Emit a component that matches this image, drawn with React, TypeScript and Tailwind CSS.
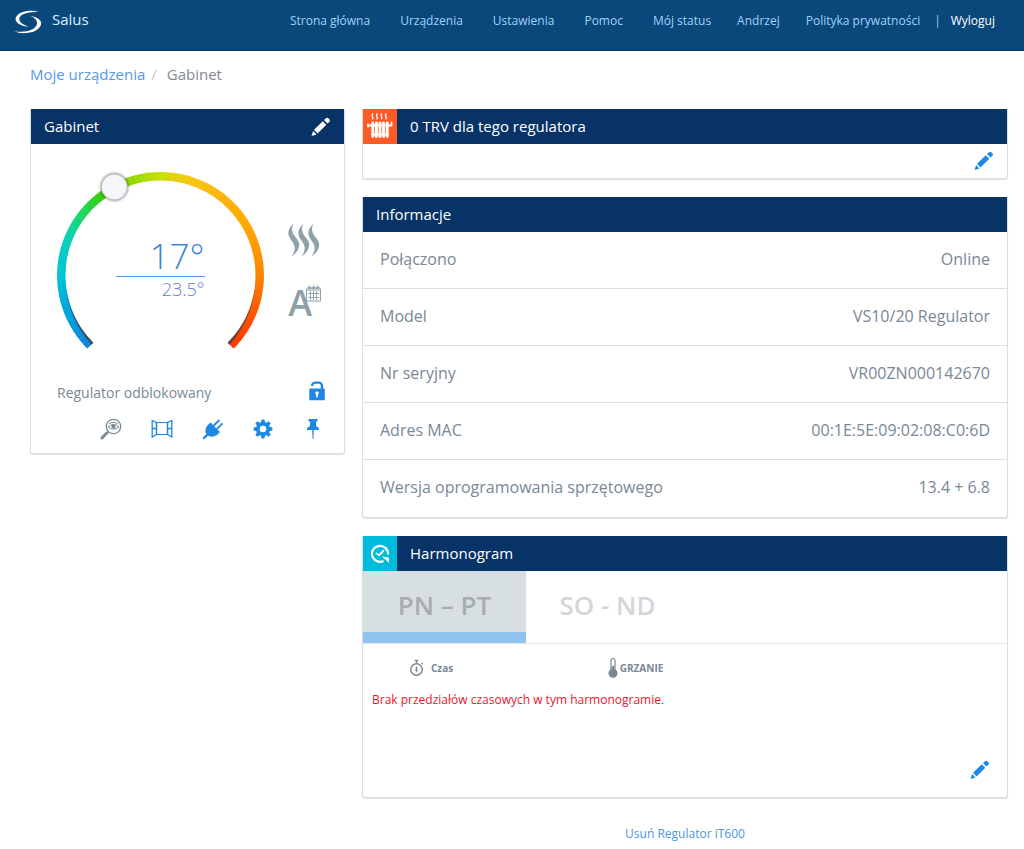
import React from 'react';

type IconProps = { className?: string };

const navLinks = ['Strona główna', 'Urządzenia', 'Ustawienia', 'Pomoc', 'Mój status'];

const deviceInfo = [
  { label: 'Połączono', value: 'Online' },
  { label: 'Model', value: 'VS10/20 Regulator' },
  { label: 'Nr seryjny', value: 'VR00ZN000142670' },
  { label: 'Adres MAC', value: '00:1E:5E:09:02:08:C0:6D' },
  { label: 'Wersja oprogramowania sprzętowego', value: '13.4 + 6.8' },
];

// [position on the arc in degrees, r, g, b]
const dialStops = [
  [0, 16, 132, 226],
  [22, 0, 164, 220],
  [45, 0, 196, 216],
  [68, 8, 212, 180],
  [85, 36, 214, 90],
  [98, 52, 208, 10],
  [115, 140, 216, 0],
  [135, 200, 222, 10],
  [148, 240, 204, 16],
  [165, 253, 186, 20],
  [195, 255, 168, 0],
  [222, 255, 138, 0],
  [248, 255, 84, 0],
  [270, 255, 56, 0],
];

const dialColor = (deg: number) => {
  const i = Math.max(1, dialStops.findIndex((stop) => stop[0] >= deg));
  const a = dialStops[i - 1];
  const b = dialStops[i];
  const t = (deg - a[0]) / (b[0] - a[0]);
  const [r, g, bl] = [1, 2, 3].map((k) => Math.round(a[k] + (b[k] - a[k]) * t));
  return `rgb(${r},${g},${bl})`;
};

const dialPoint = (deg: number, radius: number) => {
  const rad = ((deg + 135) * Math.PI) / 180;
  return `${(104.5 + radius * Math.cos(rad)).toFixed(2)} ${(105.5 + radius * Math.sin(rad)).toFixed(2)}`;
};

const Dial: React.FC = () => (
  <svg viewBox="0 0 208 180" className="col-start-1 row-start-1 w-[208px] h-[180px]" aria-hidden="true">
    <defs>
      <filter id="knob" x="-30%" y="-30%" width="160%" height="160%">
        <feDropShadow dx="0" dy="0" stdDeviation="1.4" floodColor="#000" floodOpacity="0.65" />
      </filter>
      <linearGradient id="shade" x1="0" y1="100" x2="0" y2="178" gradientUnits="userSpaceOnUse">
        <stop offset="0" stopColor="#444" stopOpacity="0.1" />
        <stop offset="0.6" stopColor="#444" stopOpacity="0.65" />
        <stop offset="1" stopColor="#444" stopOpacity="0.9" />
      </linearGradient>
    </defs>
    {Array.from({ length: 90 }, (_, i) => i * 3).map((deg) => (
      <path
        key={deg}
        d={`M${dialPoint(deg, 99.2)}A99.2 99.2 0 0 1 ${dialPoint(Math.min(270, deg + 3.4), 99.2)}`}
        stroke={dialColor(deg + 1.5)}
        strokeWidth="8.4"
        fill="none"
      />
    ))}
    <path d="M9.5 98A95 95 0 0 0 37.3 172.7L35.3 174.7A101 101 0 0 1 9.5 98Z" fill="url(#shade)" />
    <path d="M199.5 98A95 95 0 0 1 171.7 172.7L173.7 174.7A101 101 0 0 0 199.5 98Z" fill="url(#shade)" />
    <circle cx="58.3" cy="17" r="13" fill="#f5f6fa" stroke="#aaa" strokeWidth="0.8" filter="url(#knob)" />
  </svg>
);

const PencilIcon: React.FC<IconProps> = ({ className }) => (
  <svg viewBox="0 0 20 20" className={className} fill="currentColor" aria-hidden="true">
    <path d="M.5 19l1.600-5 3.400 3.400zM3 12.800l8.800-8.600 3.500 3.500-8.800 8.800zM13 3.100l2-1.900a1.700 1.700 0 0 1 2.300 0l1.200 1.200a1.700 1.700 0 0 1 0 2.300l-2 1.900z" />
  </svg>
);

const SalusLogo: React.FC<IconProps> = ({ className }) => (
  <svg viewBox="0 0 28 24" className={className} fill="#fff" aria-hidden="true">
    <path d="M24.500 2C18 -.3 9 .5 4.300 4.200C-.5 8.200 1.500 12.500 6.500 14.800C9.500 16.200 12 16.700 14.700 16.800C9.500 15 6 12.700 5.300 9.500C4.600 5 12.500 1.300 24.500 2Z" />
    <path d="M16.500 6C21 6.500 25.500 8.500 27 12C28 15.500 24.500 20 18.500 22C12.500 23.700 5 23.600 .2 21.200C8 22.400 15 21.500 19.500 18.700C24.500 15.500 25 9.300 16.500 6Z" />
  </svg>
);

const SteamIcon: React.FC<IconProps> = ({ className }) => (
  <svg viewBox="0 0 32 34" className={className} fill="currentColor" aria-hidden="true">
    {[0, 10, 20].map((x) => (
      <path
        key={x}
        transform={`translate(${x} 0)`}
        d="M5.500 .5C2 4 .2 7 .4 10.500C.7 16 6 19 6.600 24C7 27.500 5.500 30.500 3.500 33.500C8.500 30 11.300 26 11.200 21.500C11 16 5.300 13 4.300 8.500C3.700 5.800 4.300 3.300 5.500 .5Z"
      />
    ))}
  </svg>
);

const CalendarIcon: React.FC<IconProps> = ({ className }) => (
  <svg viewBox="0 0 15 17" className={className} fill="none" stroke="currentColor" aria-hidden="true">
    <path d="M.5 3.500V16h14V3.500M.5 5h14" strokeWidth="1" />
    <path d="M3.500 .5v4M7.500 .5v4M11.500 .5v4M1 3h13" strokeWidth="1.400" />
    <path d="M2 8.500h11M2 12.500h11M4.500 6v9M7.500 6v9M10.500 6v9" strokeWidth="0.900" />
  </svg>
);

const UnlockIcon: React.FC<IconProps> = ({ className }) => (
  <svg viewBox="0 0 16 20" className={className} aria-hidden="true">
    <path d="M3.200 5V4.600A3 3 0 0 1 6.200 1.600H9.800A3.200 3.200 0 0 1 13 4.800V9" fill="none" stroke="currentColor" strokeWidth="2.400" />
    <path
      d="M1.300 7.500h13.400A1 1 0 0 1 15.800 8.500V19.200H.3V8.500A1 1 0 0 1 1.300 7.500ZM8 10.500a1.600 1.600 0 0 0-.9 3V16.200h1.800V13.500a1.600 1.600 0 0 0-.9-3Z"
      fill="currentColor"
      fillRule="evenodd"
    />
  </svg>
);

const IdentifyIcon: React.FC<IconProps> = ({ className }) => (
  <svg viewBox="0 0 22 22" className={className} fill="none" stroke="currentColor" aria-hidden="true">
    <circle cx="13.500" cy="8.500" r="7.200" strokeWidth="1.300" />
    <path d="M8.300 14L6.500 15.800" strokeWidth="2" />
    <path d="M6.500 15.200L2 19.900" strokeWidth="3" strokeLinecap="round" />
    <path d="M8 9Q13.500 3.800 19 9Q13.500 13.200 8 9ZM9 5.500Q13.500 2.800 18 5.500" strokeWidth="1" />
    <circle cx="13.500" cy="8.600" r="2.100" fill="currentColor" stroke="none" />
  </svg>
);

const WindowIcon: React.FC<IconProps> = ({ className }) => (
  <svg viewBox="0 0 22 20" className={className} fill="none" stroke="currentColor" aria-hidden="true">
    <path d="M5.500 3.500h11v12h-11z" strokeWidth="1.200" />
    <path d="M1.200 1.500L5.500 3.500V15.500L1.200 18ZM20.800 1.500L16.500 3.500V15.500L20.800 18ZM1.200 9.500H5.500M16.500 9.500h4.300" strokeWidth="1.300" />
  </svg>
);

const PlugIcon: React.FC<IconProps> = ({ className }) => (
  <svg viewBox="0 0 22 22" className={className} fill="none" stroke="currentColor" aria-hidden="true">
    <path d="M8.500 5L17.500 14C14.500 18 10 19 6.500 17.500L4.500 15.500C3 12 4.500 8 8.500 5Z" fill="currentColor" strokeWidth="1" />
    <path d="M11.800 7.500L16.800 2.500M15 10.800L20 5.800" strokeWidth="1.800" strokeLinecap="round" />
    <path d="M6.500 15.500L2 20" strokeWidth="2.400" strokeLinecap="round" />
  </svg>
);

const GearIcon: React.FC<IconProps> = ({ className }) => (
  <svg viewBox="0 0 20 20" className={className} aria-hidden="true">
    <circle cx="10" cy="10" r="5.200" fill="none" stroke="currentColor" strokeWidth="3.800" />
    {[0, 45, 90, 135, 180, 225, 270, 315].map((angle) => (
      <path key={angle} d="M7.800 4L8.600 .6H11.400L12.200 4Z" fill="currentColor" transform={`rotate(${angle} 10 10)`} />
    ))}
  </svg>
);

const PinIcon: React.FC<IconProps> = ({ className }) => (
  <svg viewBox="0 0 14 22" className={className} fill="currentColor" aria-hidden="true">
    <path d="M2.500 1h9v2.400H10V8c2 .8 3 2 3.200 4H.8C1 10 2 8.800 4 8V3.400H2.500ZM6.200 12h1.600L7.400 21H6.600Z" />
  </svg>
);

const RadiatorIcon: React.FC<IconProps> = ({ className }) => (
  <svg viewBox="0 0 26 27" className={className} fill="none" stroke="currentColor" strokeLinecap="round" aria-hidden="true">
    {[5.500, 10, 14.500, 19].map((x) => (
      <path key={x} d={`M${x} 1c-1.800 2 1.600 3 0 4.800`} strokeWidth="1.400" />
    ))}
    {[5.800, 9.400, 13, 16.600, 20.200].map((x) => (
      <path key={x} d={`M${x} 10V23.500`} strokeWidth="2.900" />
    ))}
    <path d="M1 12.500H24.500V9.500M1 11.500v2M5 21.500h15" strokeWidth="1.800" />
  </svg>
);

const ClockIcon: React.FC<IconProps> = ({ className }) => (
  <svg viewBox="0 0 20 20" className={className} fill="none" stroke="currentColor" aria-hidden="true">
    <path d="M13.500 17A8 8 0 1 1 18 10.500" strokeWidth="2.200" />
    <path d="M5.800 9L9.300 11.200L14 6.200" strokeWidth="1.700" />
    <path d="M11.800 12.600L19 13.400V18.800Z" fill="currentColor" stroke="none" />
  </svg>
);

const StopwatchIcon: React.FC<IconProps> = ({ className }) => (
  <svg viewBox="0 0 16 18" className={className} fill="none" stroke="currentColor" aria-hidden="true">
    <circle cx="7.500" cy="10.500" r="5.700" strokeWidth="1.500" />
    <path d="M5.800 1.500h3.400M7.500 1.500V4.500M12.500 4L13.800 5.300M7.500 7.500V12" strokeWidth="1.400" />
    <path d="M5.900 10.700h3.200L7.500 13.200Z" fill="currentColor" stroke="none" />
  </svg>
);

const ThermometerIcon: React.FC<IconProps> = ({ className }) => (
  <svg viewBox="0 0 10 20" className={className} fill="none" stroke="currentColor" aria-hidden="true">
    <path d="M3 12V2.500a2 2 0 0 1 4 0V12" strokeWidth="1.200" />
    <path d="M5 8v6" strokeWidth="2" />
    <circle cx="5" cy="15.300" r="4.500" fill="currentColor" stroke="none" />
  </svg>
);

const Card: React.FC<{ children: React.ReactNode }> = ({ children }) => (
  <section className="bg-white border border-t-0 border-[#dcdfe1] rounded-b-[3px] shadow-[0_1px_1px_rgba(0,0,0,0.12)]">
    {children}
  </section>
);

const CardHeader: React.FC<{ title: string; icon?: React.ReactNode; action?: React.ReactNode }> = ({
  title,
  icon,
  action,
}) => (
  <header className="flex items-center h-[35px] bg-[#083366] text-white">
    {icon}
    <h2 className="flex-1 px-[13px] pb-[2px] text-[15px] leading-5">{title}</h2>
    {action}
  </header>
);

const App: React.FC = () => {
  return (
    <div className="min-h-screen bg-white font-['Open_Sans',sans-serif] text-[#788896]">
      <header className="flex items-center justify-between h-[51px] pl-[14px] pr-[29px] pb-[10px] bg-[#0a477a] border-b border-[#0a3464]">
        <a href="#" className="flex items-center gap-[10px] text-[15px] leading-5 text-[#dcefff]">
          <SalusLogo className="w-7 h-6 mt-1" />
          <span className="pb-[2px]">Salus</span>
        </a>
        <nav className="flex items-center pt-[2px] text-[12px] leading-5 text-[#9fd2fb] whitespace-nowrap">
          <div className="flex gap-[30px]">
            {navLinks.map((link) => (
              <a key={link} href="#">{link}</a>
            ))}
          </div>
          <div className="flex gap-[26px] pl-[26px]">
            <a href="#">Andrzej</a>
            <a href="#">Polityka prywatności</a>
          </div>
          <span className="pl-[14px] pr-[10px]">|</span>
          <a href="#" className="text-white">Wyloguj</a>
        </nav>
      </header>

      <main className="pl-[30px] pr-4">
        <nav className="flex items-center h-12 mb-[10px] pb-[2px] text-[15px] leading-5">
          <a href="#" className="text-[#5599e8]">Moje urządzenia</a>
          <span className="px-[6px] text-[#c4c8cc]">/</span>
          <span className="pl-1 text-[#85898f]">Gabinet</span>
        </nav>

        <div className="grid grid-cols-[315fr_646fr] gap-[17px] items-start">
          <Card>
            <CardHeader
              title="Gabinet"
              action={
                <button type="button" aria-label="Zmień nazwę" className="pr-[13px]">
                  <PencilIcon className="w-5 h-5" />
                </button>
              }
            />
            <div className="flex justify-between pt-[26px] pl-[25px] pr-[23px]">
              <div className="grid">
                <Dial />
                <div className="col-start-1 row-start-1 self-start justify-self-center w-[89px] mt-[66px] text-right font-light text-[#3f82e0]">
                  <div className="h-[41px] border-b border-[#4f9be6] text-[35px] leading-10">17°</div>
                  <div className="text-[18px] leading-6 text-[#6080cc]">23.5°</div>
                </div>
              </div>
              <div className="flex flex-col gap-7 pt-[53px] text-[#8ea0aa]">
                <SteamIcon className="w-8 h-[34px]" />
                <div className="flex items-start">
                  <span className="text-[36px] leading-9 font-semibold">A</span>
                  <CalendarIcon className="w-[15px] h-[17px] -ml-[6px]" />
                </div>
              </div>
            </div>
            <div className="flex items-start justify-between mt-[31px] pl-[26px] pr-[19px]">
              <span className="text-[14px] leading-6">Regulator odblokowany</span>
              <button type="button" aria-label="Zablokuj" className="text-[#1e88e5]">
                <UnlockIcon className="w-4 h-5" />
              </button>
            </div>
            <div className="flex items-center justify-end gap-[29px] pt-[13px] pb-[13px] pr-[24px] text-[#1e88e5]">
              <button type="button" aria-label="Identyfikuj" className="text-[#7d8c96]">
                <IdentifyIcon className="w-[22px] h-[22px]" />
              </button>
              <button type="button" aria-label="Otwarte okno">
                <WindowIcon className="w-[22px] h-5" />
              </button>
              <button type="button" aria-label="Urządzenia">
                <PlugIcon className="w-[22px] h-[22px]" />
              </button>
              <button type="button" aria-label="Ustawienia">
                <GearIcon className="w-5 h-5" />
              </button>
              <button type="button" aria-label="Przypnij" className="pl-1">
                <PinIcon className="w-[14px] h-[22px]" />
              </button>
            </div>
          </Card>

          <div className="flex flex-col gap-[18px]">
            <Card>
              <CardHeader
                title="0 TRV dla tego regulatora"
                icon={
                  <span className="flex items-center justify-center w-[34px] h-[35px] bg-[#ff5a26]">
                    <RadiatorIcon className="w-[26px] h-[27px]" />
                  </span>
                }
              />
              <div className="flex justify-end items-center h-[34px] pr-[13px] text-[#1e88e5]">
                <button type="button" aria-label="Edytuj TRV">
                  <PencilIcon className="w-5 h-5" />
                </button>
              </div>
            </Card>

            <Card>
              <CardHeader title="Informacje" />
              <table className="w-full border-separate border-spacing-0 text-base">
                <tbody>
                  {deviceInfo.map((row) => (
                    <tr key={row.label} className="group">
                      <th scope="row" className="h-[57px] pl-[17px] pb-[2px] text-left font-normal border-b border-[#dcdfe1] group-last:border-transparent">
                        {row.label}
                      </th>
                      <td className="h-[57px] pr-[17px] pb-[2px] text-right border-b border-[#dcdfe1] group-last:border-transparent">
                        {row.value}
                      </td>
                    </tr>
                  ))}
                </tbody>
              </table>
            </Card>

            <Card>
              <CardHeader
                title="Harmonogram"
                icon={
                  <span className="flex items-center justify-center w-[34px] h-[35px] bg-[#00bcdc]">
                    <ClockIcon className="w-5 h-5" />
                  </span>
                }
              />
              <div className="flex h-[73px] border-b border-[#e4e7e9] text-[26px] leading-9 font-semibold">
                <button type="button" className="w-[163px] pt-[6px] border-b-[11px] border-[#90c3f0] bg-[#d8dfe2] text-[#a9adb0]">
                  PN – PT
                </button>
                <button type="button" className="w-[163px] pt-[6px] border-b-[11px] border-transparent text-[#d3d6d8]">
                  SO - ND
                </button>
              </div>
              <table className="w-full mt-[14px] text-left">
                <thead>
                  <tr className="text-[10px] leading-5 font-bold">
                    <th className="w-[38%] pl-[46px]">
                      <span className="flex items-center gap-[6px]">
                        <StopwatchIcon className="w-4 h-[18px]" />
                        Czas
                      </span>
                    </th>
                    <th>
                      <span className="flex items-center gap-[2px]">
                        <ThermometerIcon className="w-[10px] h-5" />
                        GRZANIE
                      </span>
                    </th>
                  </tr>
                </thead>
                <tbody>
                  <tr>
                    <td colSpan={2} className="pt-3 pl-[9px] text-[12px] leading-5 text-[#f0142c]">
                      Brak przedziałów czasowych w tym harmonogramie.
                    </td>
                  </tr>
                </tbody>
              </table>
              <div className="flex justify-end pt-[50px] pr-[17px] pb-[17px] text-[#1e88e5]">
                <button type="button" aria-label="Edytuj harmonogram">
                  <PencilIcon className="w-5 h-5" />
                </button>
              </div>
            </Card>

            <a href="#" className="self-center mt-2 text-[12px] leading-5 text-[#4a97e0]">
              Usuń Regulator iT600
            </a>
          </div>
        </div>
      </main>
    </div>
  );
};

export default App;
